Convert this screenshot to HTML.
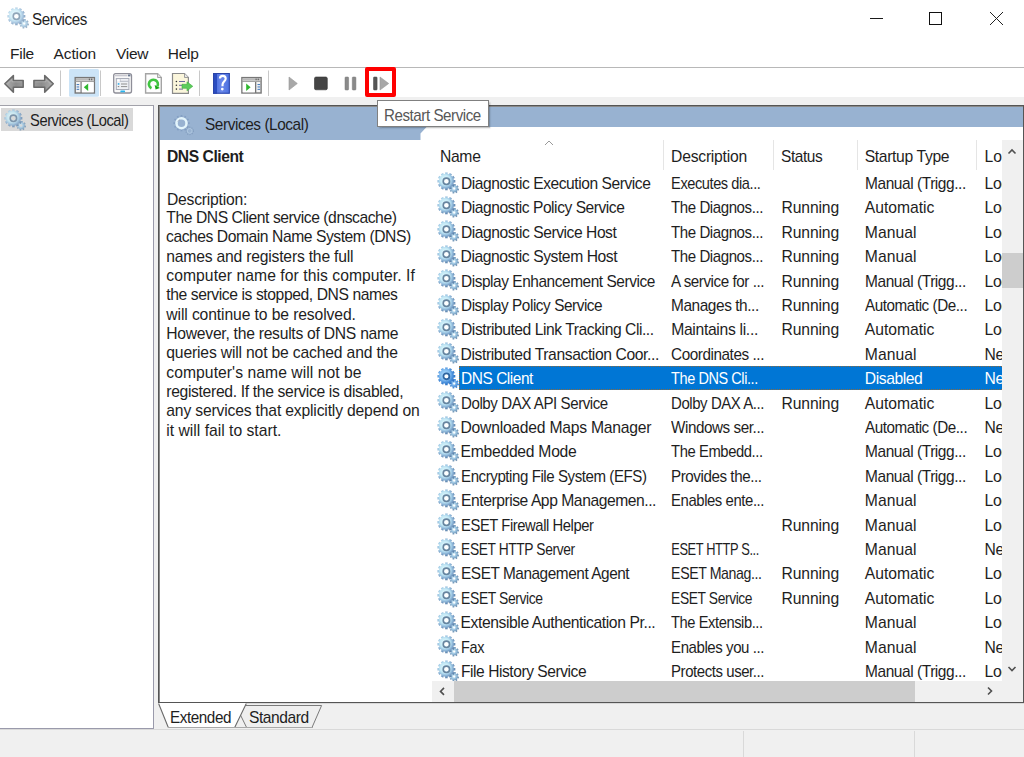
<!DOCTYPE html>
<html><head><meta charset="utf-8">
<style>
*{margin:0;padding:0;box-sizing:border-box}
html,body{width:1024px;height:757px;overflow:hidden;background:#fff;font-family:"Liberation Sans",sans-serif;color:#000}
.a{position:absolute}
.t{position:absolute;white-space:nowrap;line-height:20px;font-size:15px;color:#1e1e1e}
#toolbar-line{left:0;top:67px;width:1024px;height:1px;background:#b8b8b8}
#greyband{left:0;top:97px;width:1024px;height:660px;background:#f0f0f0}
#leftpanel{left:0;top:105px;width:154px;height:624px;background:#fff;border-top:1px solid #a2a2aa;border-right:1px solid #9a9aab;border-bottom:1px solid #9a9aab}
#lsel{left:1px;top:108px;width:132px;height:23px;background:#d9d9d9}
#rightpanel{left:158px;top:105px;width:866px;height:598px;background:#fff;border:1px solid #555;box-shadow:inset 1px 1px 0 #8a8a8a}
#hdrband{left:160px;top:107px;width:863px;height:20px;background:#98b2d1}
#selrow{left:458.7px;top:366px;width:543.3px;height:24px;background:#0076d5;border-top:1px dotted #8a6a40;border-bottom:1px dotted #8a6a40;border-left:1px dotted #8a6a40}
.sep{position:absolute;top:140px;width:1px;height:30px;background:#e5e5e5}
#vscroll{left:1002px;top:140px;width:21px;height:541px;background:#f0f0f0;z-index:5}
#vthumb{left:1002px;top:253px;width:21px;height:35px;background:#cdcdcd;z-index:5}
#hscroll{left:432px;top:681px;width:570px;height:21px;background:#f0f0f0;z-index:5}
#hthumb{left:454px;top:681px;width:461px;height:21px;background:#cdcdcd;z-index:5}
#hcorner{left:1002px;top:681px;width:21px;height:21px;background:#f0f0f0;z-index:5}
#tip{left:376.5px;top:100.3px;width:112.5px;height:27px;background:#fff;border:1px solid #808080;box-shadow:1.5px 1.5px 1.5px rgba(0,0,0,0.22);z-index:6}
#tip-t{z-index:7}
#redbox{left:365px;top:67px;width:31px;height:30px;border:4px solid #ff0000;border-radius:2px;z-index:8}
#statusline{left:0;top:729px;width:1024px;height:1px;background:#d9d9d9}
.ssep{position:absolute;top:731px;width:1px;height:26px;background:#d9d9d9}
</style></head><body>
<svg width="0" height="0" style="position:absolute"><defs><radialGradient id="gb" cx="0.42" cy="0.42" r="0.62"><stop offset="0" stop-color="#e8fbff"/><stop offset="0.45" stop-color="#c2e8f5"/><stop offset="0.62" stop-color="#9fc8e4"/><stop offset="0.8" stop-color="#789fc6"/><stop offset="1" stop-color="#52779e"/></radialGradient>
<radialGradient id="gs" cx="0.45" cy="0.45" r="0.6"><stop offset="0" stop-color="#d4eef8"/><stop offset="0.45" stop-color="#9cc4e0"/><stop offset="1" stop-color="#52779e"/></radialGradient>
<symbol id="gear" viewBox="0 0 22 22">
<path d="M20.80,16.57L22.00,16.72L21.63,18.55L20.46,18.22L19.83,19.15L20.58,20.11L19.02,21.14L18.43,20.08L17.33,20.30L17.18,21.50L15.35,21.13L15.68,19.96L14.75,19.33L13.79,20.08L12.76,18.52L13.82,17.93L13.60,16.83L12.40,16.68L12.77,14.85L13.94,15.18L14.57,14.25L13.82,13.29L15.38,12.26L15.97,13.32L17.07,13.10L17.22,11.90L19.05,12.27L18.72,13.44L19.65,14.07L20.61,13.32L21.64,14.88L20.58,15.47ZM18.30,16.60A1.1,1.1 0 1 0 16.10,16.60A1.1,1.1 0 1 0 18.30,16.60Z" fill="url(#gs)" fill-rule="evenodd"/>
<path d="M16.79,8.05L18.30,7.99L18.30,10.61L16.79,10.55L16.43,11.91L17.77,12.61L16.45,14.89L15.18,14.08L14.18,15.08L14.99,16.35L12.71,17.67L12.01,16.33L10.65,16.69L10.71,18.20L8.09,18.20L8.15,16.69L6.79,16.33L6.09,17.67L3.81,16.35L4.62,15.08L3.62,14.08L2.35,14.89L1.03,12.61L2.37,11.91L2.01,10.55L0.50,10.61L0.50,7.99L2.01,8.05L2.37,6.69L1.03,5.99L2.35,3.71L3.62,4.52L4.62,3.52L3.81,2.25L6.09,0.93L6.79,2.27L8.15,1.91L8.09,0.40L10.71,0.40L10.65,1.91L12.01,2.27L12.71,0.93L14.99,2.25L14.18,3.52L15.18,4.52L16.45,3.71L17.77,5.99L16.43,6.69ZM11.70,9.30A2.3,2.3 0 1 0 7.10,9.30A2.3,2.3 0 1 0 11.70,9.30Z" fill="url(#gb)" fill-rule="evenodd"/>
<circle cx="9.4" cy="9.3" r="3.2" fill="none" stroke="#67849f" stroke-width="1.6"/>
</symbol>
<radialGradient id="gbs" cx="0.42" cy="0.42" r="0.6"><stop offset="0" stop-color="#b8e0fa"/><stop offset="0.5" stop-color="#7fbaf0"/><stop offset="0.72" stop-color="#4a90dc"/><stop offset="1" stop-color="#2a6fc0"/></radialGradient>
<radialGradient id="gss" cx="0.45" cy="0.45" r="0.6"><stop offset="0" stop-color="#a8d4f6"/><stop offset="0.45" stop-color="#6aa8e8"/><stop offset="1" stop-color="#2a6fc0"/></radialGradient>
<symbol id="gearsel" viewBox="0 0 22 22">
<path d="M20.80,16.57L22.00,16.72L21.63,18.55L20.46,18.22L19.83,19.15L20.58,20.11L19.02,21.14L18.43,20.08L17.33,20.30L17.18,21.50L15.35,21.13L15.68,19.96L14.75,19.33L13.79,20.08L12.76,18.52L13.82,17.93L13.60,16.83L12.40,16.68L12.77,14.85L13.94,15.18L14.57,14.25L13.82,13.29L15.38,12.26L15.97,13.32L17.07,13.10L17.22,11.90L19.05,12.27L18.72,13.44L19.65,14.07L20.61,13.32L21.64,14.88L20.58,15.47ZM18.30,16.60A1.1,1.1 0 1 0 16.10,16.60A1.1,1.1 0 1 0 18.30,16.60Z" fill="url(#gss)" fill-rule="evenodd"/>
<path d="M16.79,8.05L18.30,7.99L18.30,10.61L16.79,10.55L16.43,11.91L17.77,12.61L16.45,14.89L15.18,14.08L14.18,15.08L14.99,16.35L12.71,17.67L12.01,16.33L10.65,16.69L10.71,18.20L8.09,18.20L8.15,16.69L6.79,16.33L6.09,17.67L3.81,16.35L4.62,15.08L3.62,14.08L2.35,14.89L1.03,12.61L2.37,11.91L2.01,10.55L0.50,10.61L0.50,7.99L2.01,8.05L2.37,6.69L1.03,5.99L2.35,3.71L3.62,4.52L4.62,3.52L3.81,2.25L6.09,0.93L6.79,2.27L8.15,1.91L8.09,0.40L10.71,0.40L10.65,1.91L12.01,2.27L12.71,0.93L14.99,2.25L14.18,3.52L15.18,4.52L16.45,3.71L17.77,5.99L16.43,6.69ZM11.70,9.30A2.3,2.3 0 1 0 7.10,9.30A2.3,2.3 0 1 0 11.70,9.30Z" fill="url(#gbs)" fill-rule="evenodd"/>
<circle cx="9.4" cy="9.3" r="3.0" fill="none" stroke="#2f64a0" stroke-width="1.7"/>
</symbol>
<symbol id="gearf" viewBox="0 0 22 22">
<path d="M15.85,8.36L17.66,8.34L17.66,10.06L15.85,10.04L15.41,11.65L16.99,12.54L16.13,14.02L14.58,13.10L13.40,14.28L14.32,15.83L12.84,16.69L11.95,15.11L10.34,15.55L10.36,17.36L8.64,17.36L8.66,15.55L7.05,15.11L6.16,16.69L4.68,15.83L5.60,14.28L4.42,13.10L2.87,14.02L2.01,12.54L3.59,11.65L3.15,10.04L1.34,10.06L1.34,8.34L3.15,8.36L3.59,6.75L2.01,5.86L2.87,4.38L4.42,5.30L5.60,4.12L4.68,2.57L6.16,1.71L7.05,3.29L8.66,2.85L8.64,1.04L10.36,1.04L10.34,2.85L11.95,3.29L12.84,1.71L14.32,2.57L13.40,4.12L14.58,5.30L16.13,4.38L16.99,5.86L15.41,6.75Z" fill="#7290b8" opacity="0.55"/>
<circle cx="9.5" cy="9.2" r="6.4" fill="#98b2d1"/>
<circle cx="9.5" cy="9.2" r="5.0" fill="none" stroke="#e4f5fc" stroke-width="2.5"/>
<path d="M5.8,7.5 A4,4 0 0 1 8.2,5.6" fill="none" stroke="#8a8aa0" stroke-width="0.9" opacity="0.7"/>
<circle cx="17.7" cy="16.9" r="3.6" fill="none" stroke="#7a96b8" stroke-width="1.4" stroke-dasharray="1.1 1.2" opacity="0.7"/>
<circle cx="17.7" cy="16.9" r="2.4" fill="none" stroke="#b4cce2" stroke-width="1" opacity="0.8"/>
</symbol></defs></svg>

<!-- title bar -->
<svg class="a" style="left:7px;top:7px" width="22" height="22" opacity="0.72"><use href="#gear"/></svg>
<div class="a" style="left:870px;top:18px;width:13px;height:1px;background:#1a1a1a"></div>
<div class="a" style="left:929px;top:12px;width:13px;height:13px;border:1px solid #111"></div>
<svg class="a" style="left:989px;top:11px" width="15" height="15"><path d="M1,1L14,14M14,1L1,14" stroke="#222" stroke-width="1"/></svg>
<div class="a" id="toolbar-line"></div>

<svg class="a" style="left:0;top:0" width="400" height="100" viewBox="0 0 400 100">
<defs>
<linearGradient id="ag" x1="0" y1="0" x2="1" y2="0"><stop offset="0" stop-color="#b0b0b0"/><stop offset="0.6" stop-color="#8c8c8c"/><stop offset="1" stop-color="#9a9a9a"/></linearGradient><linearGradient id="ag2" x1="1" y1="0" x2="0" y2="0"><stop offset="0" stop-color="#b0b0b0"/><stop offset="0.6" stop-color="#8c8c8c"/><stop offset="1" stop-color="#9a9a9a"/></linearGradient>
<linearGradient id="hb" x1="0" y1="0" x2="1" y2="0"><stop offset="0" stop-color="#3d62d8"/><stop offset="0.5" stop-color="#6a88ea"/><stop offset="1" stop-color="#4a70e0"/></linearGradient>
</defs>
<!-- back arrow -->
<path d="M4.8,83.8 L13.4,75.6 L13.4,80.4 L23.2,80.4 L23.2,87.3 L13.4,87.3 L13.4,92.3 Z" fill="url(#ag)" stroke="#6a6a6a" stroke-width="1.5" stroke-linejoin="round"/><path d="M7.5,83.8 L12,79.5 L12,81.8 L21.8,81.8" fill="none" stroke="#c4c4c4" stroke-width="0.7" opacity="0.7"/>
<!-- forward arrow -->
<path d="M53.3,83.8 L44.7,75.6 L44.7,80.4 L33.9,80.4 L33.9,87.3 L44.7,87.3 L44.7,92.3 Z" fill="url(#ag2)" stroke="#6a6a6a" stroke-width="1.5" stroke-linejoin="round"/><path d="M35.3,81.8 L46,81.8 L46,79.5 L50.5,83.8" fill="none" stroke="#c4c4c4" stroke-width="0.7" opacity="0.7"/>
<!-- separators -->
<rect x="60" y="70.5" width="1" height="25.5" fill="#c8c8c8"/>
<rect x="100" y="70.5" width="1" height="25.5" fill="#c8c8c8"/>
<rect x="199" y="70.5" width="1" height="25.5" fill="#c8c8c8"/>
<rect x="268" y="70.5" width="1" height="25.5" fill="#c8c8c8"/>
<!-- selected button -->
<rect x="69" y="69" width="30" height="27.8" rx="1.5" fill="#cce4f7"/>
<!-- console tree icon -->
<rect x="75.2" y="77.6" width="19.2" height="15.4" fill="#f4f4f4" stroke="#777" stroke-width="1.4"/>
<rect x="75.9" y="78.3" width="17.8" height="2.4" fill="#b8b8b8"/><rect x="91" y="78.6" width="1.2" height="1.6" fill="#666"/><rect x="88.8" y="78.6" width="1.2" height="1.6" fill="#666"/>
<rect x="75.2" y="81" width="19.2" height="0.9" fill="#9a9a9a"/>
<rect x="80.5" y="82" width="1.3" height="11" fill="#777"/>
<rect x="81.8" y="82.2" width="11.9" height="10.1" fill="#fff"/>
<rect x="76.6" y="84" width="2.6" height="1.1" fill="#4a7fc0"/>
<rect x="76.6" y="86.4" width="2.6" height="1.1" fill="#4a7fc0"/>
<rect x="76.6" y="88.8" width="2.6" height="1.1" fill="#4a7fc0"/>
<path d="M83.8,87.3 L88.2,83.6 L88.2,91 Z" fill="#30b830"/>
<!-- properties icon -->
<rect x="113.7" y="73.6" width="17.8" height="19.4" rx="2" fill="#f8f8f8" stroke="#8e8e98" stroke-width="1.3"/>
<rect x="115" y="75" width="12.5" height="1.3" fill="#c8c8d0"/>
<rect x="128" y="74.5" width="2.4" height="1.9" fill="#6a7890"/>
<rect x="116.3" y="78.5" width="12.6" height="11" fill="#eef0f4" stroke="#a8acb8" stroke-width="1"/>
<path d="M117,79 L120,79 L120,81.3 L128.4,81.3" fill="none" stroke="#b0b4c0" stroke-width="0.9"/>
<rect x="117.2" y="79.2" width="2.6" height="2" fill="#fff"/>
<rect x="117.8" y="83.2" width="1.6" height="1.5" fill="#29a8e8"/>
<rect x="121" y="83.4" width="6.2" height="1.2" fill="#a0a0a0"/>
<rect x="117.8" y="86" width="1.4" height="1.1" fill="#888"/>
<rect x="121" y="86" width="6.2" height="1.1" fill="#999"/>
<rect x="120.4" y="90.6" width="4.6" height="1.7" rx="0.5" fill="#29b4ee"/>
<!-- refresh doc -->
<path d="M145.6,73.7 L157.6,73.7 L161.3,77.5 L161.3,93 L145.6,93 Z" fill="#fdfdfd" stroke="#a4a4a4" stroke-width="1.4"/>
<path d="M157.6,73.7 L157.6,77.5 L161.3,77.5" fill="#e6e6e6" stroke="#9a9a9a" stroke-width="0.9"/>
<path d="M151.50,88.28 A4.5,4.5 0 1 1 157.30,86.45" fill="none" stroke="#40c440" stroke-width="2.6"/>
<path d="M159.90,87.95 L154.70,84.95 L155.60,89.39 Z" fill="#12a812"/>
<!-- export list doc -->
<path d="M172.5,73.5 L184.5,73.5 L188.4,77.5 L188.4,93.3 L172.5,93.3 Z" fill="#fbf6dc" stroke="#8a8a8a" stroke-width="1.2"/>
<path d="M184.5,73.5 L184.5,77.5 L188.4,77.5" fill="#e8e8e8" stroke="#8a8a8a" stroke-width="0.8"/>
<circle cx="176.4" cy="81.5" r="0.8" fill="#333"/><rect x="179" y="81" width="6" height="1" fill="#6a6aa0"/>
<circle cx="176.4" cy="85.3" r="0.8" fill="#333"/><rect x="179" y="84.8" width="4" height="1" fill="#6a6aa0"/>
<circle cx="176.4" cy="89.1" r="0.8" fill="#333"/><rect x="179" y="88.6" width="4" height="1" fill="#6a6aa0"/>
<path d="M182,84.3 L187,84.3 L187,81.8 L192.8,86.3 L187,90.8 L187,88.3 L182,88.3 Z" fill="#5ccc5c" stroke="#3fae3f" stroke-width="0.6"/>
<!-- help -->
<rect x="213" y="73" width="16.8" height="20.7" fill="url(#hb)"/>
<rect x="213" y="73" width="4" height="20.7" fill="#2b4cc0"/>
<rect x="213.5" y="73.5" width="15.8" height="19.7" fill="none" stroke="#2a44a8" stroke-width="1"/>
<path d="M219.9,78.6 C219.9,76.6 221.2,75.9 222.8,75.9 C224.7,75.9 225.7,77.1 225.7,78.7 C225.7,80.9 223.0,81.6 222.6,84.2 L222.5,86.3" fill="none" stroke="#ffffff" stroke-width="2.1"/>
<circle cx="222.3" cy="89.1" r="1.35" fill="#fff"/>
<!-- action pane icon -->
<rect x="241.9" y="77.6" width="19.2" height="15.4" fill="#f4f4f4" stroke="#777" stroke-width="1.4"/>
<rect x="242.6" y="78.3" width="17.8" height="2.4" fill="#b8b8b8"/><rect x="257.7" y="78.6" width="1.2" height="1.6" fill="#666"/><rect x="255.5" y="78.6" width="1.2" height="1.6" fill="#666"/>
<rect x="241.9" y="81" width="19.2" height="0.9" fill="#9a9a9a"/>
<rect x="255" y="82" width="1.3" height="11" fill="#777"/>
<rect x="242.8" y="82.2" width="12" height="10.1" fill="#fff"/>
<rect x="257.5" y="84" width="2.6" height="1.1" fill="#4a7fc0"/>
<rect x="257.5" y="86.4" width="2.6" height="1.1" fill="#4a7fc0"/>
<rect x="257.5" y="88.8" width="2.6" height="1.1" fill="#4a7fc0"/>
<path d="M246.2,83.6 L250.6,87.3 L246.2,91 Z" fill="#30b830"/>
<!-- play -->
<path d="M289,77 L297.3,83.5 L289,90 Z" fill="#a8a8a8" stroke="#999" stroke-width="0.6" stroke-linejoin="round"/>
<!-- stop -->
<rect x="314.5" y="77" width="12.8" height="12.8" rx="1.5" fill="#454545" stroke="#333" stroke-width="0.6"/>
<!-- pause -->
<rect x="345" y="77" width="3.6" height="13" rx="0.8" fill="#8a8a8a" stroke="#777" stroke-width="0.5"/>
<rect x="352.3" y="77" width="3.6" height="13" rx="0.8" fill="#8a8a8a" stroke="#777" stroke-width="0.5"/>
<!-- restart -->
<rect x="373.5" y="77" width="3.6" height="13" rx="0.8" fill="#555" stroke="#444" stroke-width="0.5"/>
<path d="M380,77 L388.7,83.5 L380,90 Z" fill="#a8a8a8" stroke="#999" stroke-width="0.6" stroke-linejoin="round"/>
</svg>


<div class="a" id="greyband"></div>
<div class="a" id="leftpanel"></div>
<div class="a" id="lsel"></div>
<svg class="a" style="left:3.5px;top:108.8px" width="22" height="22" opacity="0.8"><use href="#gear"/></svg>

<div class="a" id="rightpanel"></div>
<div class="a" id="hdrband"></div>
<svg class="a" style="left:0;top:0" width="440" height="145"><path d="M160,126.5 L427,126.5 L420.5,133.5 L420.5,140 L160,140 Z" fill="#98b2d1"/></svg>
<svg class="a" style="left:172px;top:113.5px" width="22" height="22"><use href="#gearf"/></svg>

<!-- list header -->
<svg class="a" style="left:543.5px;top:140px" width="10" height="6"><path d="M1,5L5,1L9,5" fill="none" stroke="#999" stroke-width="1"/></svg>
<div class="sep" style="left:663px"></div>
<div class="sep" style="left:773px"></div>
<div class="sep" style="left:857px"></div>
<div class="sep" style="left:976px"></div>

<div class="a" style="left:160px;top:703px;width:864px;height:1px;background:#d8d8d8"></div>
<!-- bottom tabs -->
<svg class="a" style="left:150px;top:700px" width="200" height="32" viewBox="150 700 200 32">

<path d="M235.8,705.5 L321.6,705.5 L312,727.5 L246.6,727.5 Z" fill="#efefef"/>
<path d="M235.8,705.5 L321.6,705.5 L312,727.5 M246.6,727.5 L235.8,705.5" fill="none" stroke="#7a7a7a" stroke-width="1"/>
<path d="M158.3,703 L246.6,703 L234.8,727.5 L168,727.5 Z" fill="#fff"/>
<path d="M158.6,703.5 L168.2,727.3 M234.8,727.3 L246.3,703.5" fill="none" stroke="#6a6a6a" stroke-width="1.1"/>
<rect x="168" y="727" width="145" height="1" fill="#a8a8a8"/>
</svg>
<div class="a" id="selrow"></div>
<svg class="a gi" style="left:437px;top:171.6px" width="22" height="22"><use href="#gear"/></svg>
<svg class="a gi" style="left:437px;top:196.0px" width="22" height="22"><use href="#gear"/></svg>
<svg class="a gi" style="left:437px;top:220.4px" width="22" height="22"><use href="#gear"/></svg>
<svg class="a gi" style="left:437px;top:244.8px" width="22" height="22"><use href="#gear"/></svg>
<svg class="a gi" style="left:437px;top:269.2px" width="22" height="22"><use href="#gear"/></svg>
<svg class="a gi" style="left:437px;top:293.6px" width="22" height="22"><use href="#gear"/></svg>
<svg class="a gi" style="left:437px;top:318.0px" width="22" height="22"><use href="#gear"/></svg>
<svg class="a gi" style="left:437px;top:342.4px" width="22" height="22"><use href="#gear"/></svg>
<svg class="a gi" style="left:437px;top:366.8px" width="22" height="22"><use href="#gearsel"/></svg>
<svg class="a gi" style="left:437px;top:391.2px" width="22" height="22"><use href="#gear"/></svg>
<svg class="a gi" style="left:437px;top:415.6px" width="22" height="22"><use href="#gear"/></svg>
<svg class="a gi" style="left:437px;top:440.0px" width="22" height="22"><use href="#gear"/></svg>
<svg class="a gi" style="left:437px;top:464.4px" width="22" height="22"><use href="#gear"/></svg>
<svg class="a gi" style="left:437px;top:488.8px" width="22" height="22"><use href="#gear"/></svg>
<svg class="a gi" style="left:437px;top:513.2px" width="22" height="22"><use href="#gear"/></svg>
<svg class="a gi" style="left:437px;top:537.6px" width="22" height="22"><use href="#gear"/></svg>
<svg class="a gi" style="left:437px;top:562.0px" width="22" height="22"><use href="#gear"/></svg>
<svg class="a gi" style="left:437px;top:586.4px" width="22" height="22"><use href="#gear"/></svg>
<svg class="a gi" style="left:437px;top:610.8px" width="22" height="22"><use href="#gear"/></svg>
<svg class="a gi" style="left:437px;top:635.2px" width="22" height="22"><use href="#gear"/></svg>
<svg class="a gi" style="left:437px;top:659.6px" width="22" height="22"><use href="#gear"/></svg>


<div id="title" class="t" style="left:31.6px;top:9.05px;font-size:16.3px;letter-spacing:-0.450px;transform:scaleX(0.9311);transform-origin:1.0px 0;">Services</div>
<div id="m1" class="t" style="left:10.0px;top:44.03px;font-size:15.5px;letter-spacing:-0.261px;">File</div>
<div id="m2" class="t" style="left:53.5px;top:44.03px;font-size:15.5px;letter-spacing:-0.099px;">Action</div>
<div id="m3" class="t" style="left:116.0px;top:44.03px;font-size:15.5px;letter-spacing:-0.309px;">View</div>
<div id="m4" class="t" style="left:167.7px;top:44.03px;font-size:15.5px;letter-spacing:-0.230px;">Help</div>
<div id="tree" class="t" style="left:30.2px;top:111.26px;font-size:15.7px;letter-spacing:-0.450px;transform:scaleX(0.9341);transform-origin:1.0px 0;">Services (Local)</div>
<div id="phdr" class="t" style="left:204.8px;top:114.96px;font-size:15.7px;letter-spacing:-0.450px;transform:scaleX(0.9819);transform-origin:1.0px 0;">Services (Local)</div>
<div id="dnsb" class="t" style="left:166.9px;top:146.76px;font-size:15.7px;letter-spacing:-0.450px;transform:scaleX(0.9972);transform-origin:1.0px 0;font-weight:bold">DNS Client</div>
<div id="desc0" class="t" style="left:166.9px;top:189.86px;font-size:15.7px;letter-spacing:-0.212px;">Description:</div>
<div id="d0" class="t" style="left:166.3px;top:207.86px;font-size:15.7px;letter-spacing:-0.450px;">The DNS Client service (dnscache)</div>
<div id="d1" class="t" style="left:166.3px;top:227.21px;font-size:15.7px;letter-spacing:-0.450px;transform:scaleX(0.9987);transform-origin:1.0px 0;">caches Domain Name System (DNS)</div>
<div id="d2" class="t" style="left:166.3px;top:246.56px;font-size:15.7px;letter-spacing:-0.204px;">names and registers the full</div>
<div id="d3" class="t" style="left:166.3px;top:265.91px;font-size:15.7px;letter-spacing:0.051px;">computer name for this computer. If</div>
<div id="d4" class="t" style="left:166.3px;top:285.26px;font-size:15.7px;letter-spacing:-0.419px;">the service is stopped, DNS names</div>
<div id="d5" class="t" style="left:166.3px;top:304.61px;font-size:15.7px;letter-spacing:-0.111px;">will continue to be resolved.</div>
<div id="d6" class="t" style="left:166.3px;top:323.96px;font-size:15.7px;letter-spacing:-0.270px;">However, the results of DNS name</div>
<div id="d7" class="t" style="left:166.3px;top:343.31px;font-size:15.7px;letter-spacing:-0.170px;">queries will not be cached and the</div>
<div id="d8" class="t" style="left:166.3px;top:362.66px;font-size:15.7px;letter-spacing:0.052px;">computer's name will not be</div>
<div id="d9" class="t" style="left:166.3px;top:382.01px;font-size:15.7px;letter-spacing:-0.341px;">registered. If the service is disabled,</div>
<div id="d10" class="t" style="left:166.3px;top:401.36px;font-size:15.7px;letter-spacing:-0.172px;">any services that explicitly depend on</div>
<div id="d11" class="t" style="left:166.3px;top:420.71px;font-size:15.7px;letter-spacing:0.000px;">it will fail to start.</div>
<div id="h0" class="t" style="left:439.9px;top:146.66px;font-size:15.7px;letter-spacing:-0.286px;">Name</div>
<div id="h1" class="t" style="left:671.1px;top:146.66px;font-size:15.7px;letter-spacing:-0.237px;">Description</div>
<div id="h2" class="t" style="left:781.3px;top:146.66px;font-size:15.7px;letter-spacing:-0.450px;transform:scaleX(0.9850);transform-origin:1.0px 0;">Status</div>
<div id="h3" class="t" style="left:864.7px;top:146.66px;font-size:15.7px;letter-spacing:-0.352px;">Startup Type</div>
<div id="h4" class="t" style="left:984.5px;top:146.66px;font-size:15.7px;letter-spacing:0.000px;">Log On As</div>
<div id="tip-t" class="t" style="left:383.8px;top:105.56px;font-size:15.7px;letter-spacing:-0.450px;transform:scaleX(0.9630);transform-origin:1.0px 0;color:#575757">Restart Service</div>
<div id="tab1" class="t" style="left:170.4px;top:708.26px;font-size:15.7px;letter-spacing:-0.450px;transform:scaleX(0.9723);transform-origin:1.0px 0;">Extended</div>
<div id="tab2" class="t" style="left:248.7px;top:708.26px;font-size:15.7px;letter-spacing:-0.450px;transform:scaleX(0.9930);transform-origin:1.0px 0;">Standard</div>
<div id="r0c0" class="t rt" style="left:460.5px;top:174.06px;font-size:15.7px;letter-spacing:-0.450px;transform:scaleX(0.9936);transform-origin:1.0px 0;">Diagnostic Execution Service</div>
<div id="r0c1" class="t rt" style="left:671.2px;top:174.06px;font-size:15.7px;letter-spacing:-0.450px;transform:scaleX(0.9295);transform-origin:1.0px 0;">Executes dia...</div>
<div id="r0c3" class="t rt" style="left:864.8px;top:174.06px;font-size:15.7px;letter-spacing:-0.450px;transform:scaleX(0.9870);transform-origin:1.0px 0;">Manual (Trigg...</div>
<div id="r0c4" class="t rt" style="left:984.5px;top:174.06px;font-size:15.7px;letter-spacing:0.000px;;letter-spacing:-0.3px">Local System</div>
<div id="r1c0" class="t rt" style="left:460.5px;top:198.46px;font-size:15.7px;letter-spacing:-0.450px;transform:scaleX(0.9908);transform-origin:1.0px 0;">Diagnostic Policy Service</div>
<div id="r1c1" class="t rt" style="left:671.2px;top:198.46px;font-size:15.7px;letter-spacing:-0.450px;transform:scaleX(0.9596);transform-origin:1.0px 0;">The Diagnos...</div>
<div id="r1c2" class="t rt" style="left:781.5px;top:198.46px;font-size:15.7px;letter-spacing:-0.123px;">Running</div>
<div id="r1c3" class="t rt" style="left:864.8px;top:198.46px;font-size:15.7px;letter-spacing:-0.021px;">Automatic</div>
<div id="r1c4" class="t rt" style="left:984.5px;top:198.46px;font-size:15.7px;letter-spacing:0.000px;;letter-spacing:-0.3px">Local System</div>
<div id="r2c0" class="t rt" style="left:460.5px;top:222.86px;font-size:15.7px;letter-spacing:-0.450px;transform:scaleX(0.9947);transform-origin:1.0px 0;">Diagnostic Service Host</div>
<div id="r2c1" class="t rt" style="left:671.2px;top:222.86px;font-size:15.7px;letter-spacing:-0.450px;transform:scaleX(0.9596);transform-origin:1.0px 0;">The Diagnos...</div>
<div id="r2c2" class="t rt" style="left:781.5px;top:222.86px;font-size:15.7px;letter-spacing:-0.123px;">Running</div>
<div id="r2c3" class="t rt" style="left:864.8px;top:222.86px;font-size:15.7px;letter-spacing:0.029px;">Manual</div>
<div id="r2c4" class="t rt" style="left:984.5px;top:222.86px;font-size:15.7px;letter-spacing:0.000px;;letter-spacing:-0.3px">Local System</div>
<div id="r3c0" class="t rt" style="left:460.5px;top:247.26px;font-size:15.7px;letter-spacing:-0.450px;">Diagnostic System Host</div>
<div id="r3c1" class="t rt" style="left:671.2px;top:247.26px;font-size:15.7px;letter-spacing:-0.450px;transform:scaleX(0.9596);transform-origin:1.0px 0;">The Diagnos...</div>
<div id="r3c2" class="t rt" style="left:781.5px;top:247.26px;font-size:15.7px;letter-spacing:-0.123px;">Running</div>
<div id="r3c3" class="t rt" style="left:864.8px;top:247.26px;font-size:15.7px;letter-spacing:0.029px;">Manual</div>
<div id="r3c4" class="t rt" style="left:984.5px;top:247.26px;font-size:15.7px;letter-spacing:0.000px;;letter-spacing:-0.3px">Local System</div>
<div id="r4c0" class="t rt" style="left:460.5px;top:271.66px;font-size:15.7px;letter-spacing:-0.450px;transform:scaleX(0.9834);transform-origin:1.0px 0;">Display Enhancement Service</div>
<div id="r4c1" class="t rt" style="left:671.2px;top:271.66px;font-size:15.7px;letter-spacing:-0.450px;transform:scaleX(0.9674);transform-origin:1.0px 0;">A service for ...</div>
<div id="r4c2" class="t rt" style="left:781.5px;top:271.66px;font-size:15.7px;letter-spacing:-0.123px;">Running</div>
<div id="r4c3" class="t rt" style="left:864.8px;top:271.66px;font-size:15.7px;letter-spacing:-0.450px;transform:scaleX(0.9870);transform-origin:1.0px 0;">Manual (Trigg...</div>
<div id="r4c4" class="t rt" style="left:984.5px;top:271.66px;font-size:15.7px;letter-spacing:0.000px;;letter-spacing:-0.3px">Local System</div>
<div id="r5c0" class="t rt" style="left:460.5px;top:296.06px;font-size:15.7px;letter-spacing:-0.450px;transform:scaleX(0.9775);transform-origin:1.0px 0;">Display Policy Service</div>
<div id="r5c1" class="t rt" style="left:671.2px;top:296.06px;font-size:15.7px;letter-spacing:-0.450px;transform:scaleX(0.9837);transform-origin:1.0px 0;">Manages th...</div>
<div id="r5c2" class="t rt" style="left:781.5px;top:296.06px;font-size:15.7px;letter-spacing:-0.123px;">Running</div>
<div id="r5c3" class="t rt" style="left:864.8px;top:296.06px;font-size:15.7px;letter-spacing:-0.450px;transform:scaleX(0.9705);transform-origin:1.0px 0;">Automatic (De...</div>
<div id="r5c4" class="t rt" style="left:984.5px;top:296.06px;font-size:15.7px;letter-spacing:0.000px;;letter-spacing:-0.3px">Local System</div>
<div id="r6c0" class="t rt" style="left:460.5px;top:320.46px;font-size:15.7px;letter-spacing:-0.450px;transform:scaleX(0.9977);transform-origin:1.0px 0;">Distributed Link Tracking Cli...</div>
<div id="r6c1" class="t rt" style="left:671.2px;top:320.46px;font-size:15.7px;letter-spacing:-0.318px;">Maintains li...</div>
<div id="r6c2" class="t rt" style="left:781.5px;top:320.46px;font-size:15.7px;letter-spacing:-0.123px;">Running</div>
<div id="r6c3" class="t rt" style="left:864.8px;top:320.46px;font-size:15.7px;letter-spacing:-0.021px;">Automatic</div>
<div id="r6c4" class="t rt" style="left:984.5px;top:320.46px;font-size:15.7px;letter-spacing:0.000px;;letter-spacing:-0.3px">Local System</div>
<div id="r7c0" class="t rt" style="left:460.5px;top:344.86px;font-size:15.7px;letter-spacing:-0.407px;">Distributed Transaction Coor...</div>
<div id="r7c1" class="t rt" style="left:671.2px;top:344.86px;font-size:15.7px;letter-spacing:-0.450px;transform:scaleX(0.9756);transform-origin:1.0px 0;">Coordinates ...</div>
<div id="r7c3" class="t rt" style="left:864.8px;top:344.86px;font-size:15.7px;letter-spacing:0.029px;">Manual</div>
<div id="r7c4" class="t rt" style="left:984.5px;top:344.86px;font-size:15.7px;letter-spacing:0.000px;;letter-spacing:-0.3px">Network Service</div>
<div id="r8c0" class="t rt" style="left:460.5px;top:369.26px;font-size:15.7px;letter-spacing:-0.450px;transform:scaleX(0.9844);transform-origin:1.0px 0;color:#fff">DNS Client</div>
<div id="r8c1" class="t rt" style="left:671.2px;top:369.26px;font-size:15.7px;letter-spacing:-0.450px;transform:scaleX(0.9227);transform-origin:1.0px 0;color:#fff">The DNS Cli...</div>
<div id="r8c3" class="t rt" style="left:864.8px;top:369.26px;font-size:15.7px;letter-spacing:-0.435px;color:#fff">Disabled</div>
<div id="r8c4" class="t rt" style="left:984.5px;top:369.26px;font-size:15.7px;letter-spacing:0.000px;color:#fff;letter-spacing:-0.3px">Network Service</div>
<div id="r9c0" class="t rt" style="left:460.5px;top:393.66px;font-size:15.7px;letter-spacing:-0.450px;transform:scaleX(0.9610);transform-origin:1.0px 0;">Dolby DAX API Service</div>
<div id="r9c1" class="t rt" style="left:671.2px;top:393.66px;font-size:15.7px;letter-spacing:-0.450px;transform:scaleX(0.9539);transform-origin:1.0px 0;">Dolby DAX A...</div>
<div id="r9c2" class="t rt" style="left:781.5px;top:393.66px;font-size:15.7px;letter-spacing:-0.123px;">Running</div>
<div id="r9c3" class="t rt" style="left:864.8px;top:393.66px;font-size:15.7px;letter-spacing:-0.021px;">Automatic</div>
<div id="r9c4" class="t rt" style="left:984.5px;top:393.66px;font-size:15.7px;letter-spacing:0.000px;;letter-spacing:-0.3px">Local System</div>
<div id="r10c0" class="t rt" style="left:460.5px;top:418.06px;font-size:15.7px;letter-spacing:-0.242px;">Downloaded Maps Manager</div>
<div id="r10c1" class="t rt" style="left:671.2px;top:418.06px;font-size:15.7px;letter-spacing:-0.450px;transform:scaleX(0.9714);transform-origin:1.0px 0;">Windows ser...</div>
<div id="r10c3" class="t rt" style="left:864.8px;top:418.06px;font-size:15.7px;letter-spacing:-0.450px;transform:scaleX(0.9705);transform-origin:1.0px 0;">Automatic (De...</div>
<div id="r10c4" class="t rt" style="left:984.5px;top:418.06px;font-size:15.7px;letter-spacing:0.000px;;letter-spacing:-0.3px">Network Service</div>
<div id="r11c0" class="t rt" style="left:460.5px;top:442.46px;font-size:15.7px;letter-spacing:-0.265px;">Embedded Mode</div>
<div id="r11c1" class="t rt" style="left:671.2px;top:442.46px;font-size:15.7px;letter-spacing:-0.450px;transform:scaleX(0.9435);transform-origin:1.0px 0;">The Embedd...</div>
<div id="r11c3" class="t rt" style="left:864.8px;top:442.46px;font-size:15.7px;letter-spacing:-0.450px;transform:scaleX(0.9870);transform-origin:1.0px 0;">Manual (Trigg...</div>
<div id="r11c4" class="t rt" style="left:984.5px;top:442.46px;font-size:15.7px;letter-spacing:0.000px;;letter-spacing:-0.3px">Local System</div>
<div id="r12c0" class="t rt" style="left:460.5px;top:466.86px;font-size:15.7px;letter-spacing:-0.450px;transform:scaleX(0.9603);transform-origin:1.0px 0;">Encrypting File System (EFS)</div>
<div id="r12c1" class="t rt" style="left:671.2px;top:466.86px;font-size:15.7px;letter-spacing:-0.450px;transform:scaleX(0.9672);transform-origin:1.0px 0;">Provides the...</div>
<div id="r12c3" class="t rt" style="left:864.8px;top:466.86px;font-size:15.7px;letter-spacing:-0.450px;transform:scaleX(0.9870);transform-origin:1.0px 0;">Manual (Trigg...</div>
<div id="r12c4" class="t rt" style="left:984.5px;top:466.86px;font-size:15.7px;letter-spacing:0.000px;;letter-spacing:-0.3px">Local System</div>
<div id="r13c0" class="t rt" style="left:460.5px;top:491.26px;font-size:15.7px;letter-spacing:-0.450px;transform:scaleX(0.9977);transform-origin:1.0px 0;">Enterprise App Managemen...</div>
<div id="r13c1" class="t rt" style="left:671.2px;top:491.26px;font-size:15.7px;letter-spacing:-0.450px;transform:scaleX(0.9495);transform-origin:1.0px 0;">Enables ente...</div>
<div id="r13c3" class="t rt" style="left:864.8px;top:491.26px;font-size:15.7px;letter-spacing:0.029px;">Manual</div>
<div id="r13c4" class="t rt" style="left:984.5px;top:491.26px;font-size:15.7px;letter-spacing:0.000px;;letter-spacing:-0.3px">Local System</div>
<div id="r14c0" class="t rt" style="left:460.5px;top:515.66px;font-size:15.7px;letter-spacing:-0.450px;transform:scaleX(0.9417);transform-origin:1.0px 0;">ESET Firewall Helper</div>
<div id="r14c2" class="t rt" style="left:781.5px;top:515.66px;font-size:15.7px;letter-spacing:-0.123px;">Running</div>
<div id="r14c3" class="t rt" style="left:864.8px;top:515.66px;font-size:15.7px;letter-spacing:0.029px;">Manual</div>
<div id="r14c4" class="t rt" style="left:984.5px;top:515.66px;font-size:15.7px;letter-spacing:0.000px;;letter-spacing:-0.3px">Local System</div>
<div id="r15c0" class="t rt" style="left:460.5px;top:540.06px;font-size:15.7px;letter-spacing:-0.450px;transform:scaleX(0.8792);transform-origin:1.0px 0;">ESET HTTP Server</div>
<div id="r15c1" class="t rt" style="left:671.2px;top:540.06px;font-size:15.7px;letter-spacing:-0.450px;transform:scaleX(0.8184);transform-origin:1.0px 0;">ESET HTTP S...</div>
<div id="r15c3" class="t rt" style="left:864.8px;top:540.06px;font-size:15.7px;letter-spacing:0.029px;">Manual</div>
<div id="r15c4" class="t rt" style="left:984.5px;top:540.06px;font-size:15.7px;letter-spacing:0.000px;;letter-spacing:-0.3px">Network Service</div>
<div id="r16c0" class="t rt" style="left:460.5px;top:564.46px;font-size:15.7px;letter-spacing:-0.450px;transform:scaleX(0.9796);transform-origin:1.0px 0;">ESET Management Agent</div>
<div id="r16c1" class="t rt" style="left:671.2px;top:564.46px;font-size:15.7px;letter-spacing:-0.450px;transform:scaleX(0.9027);transform-origin:1.0px 0;">ESET Manag...</div>
<div id="r16c2" class="t rt" style="left:781.5px;top:564.46px;font-size:15.7px;letter-spacing:-0.123px;">Running</div>
<div id="r16c3" class="t rt" style="left:864.8px;top:564.46px;font-size:15.7px;letter-spacing:-0.021px;">Automatic</div>
<div id="r16c4" class="t rt" style="left:984.5px;top:564.46px;font-size:15.7px;letter-spacing:0.000px;;letter-spacing:-0.3px">Local System</div>
<div id="r17c0" class="t rt" style="left:460.5px;top:588.86px;font-size:15.7px;letter-spacing:-0.450px;transform:scaleX(0.8874);transform-origin:1.0px 0;">ESET Service</div>
<div id="r17c1" class="t rt" style="left:671.2px;top:588.86px;font-size:15.7px;letter-spacing:-0.450px;transform:scaleX(0.8809);transform-origin:1.0px 0;">ESET Service</div>
<div id="r17c2" class="t rt" style="left:781.5px;top:588.86px;font-size:15.7px;letter-spacing:-0.123px;">Running</div>
<div id="r17c3" class="t rt" style="left:864.8px;top:588.86px;font-size:15.7px;letter-spacing:-0.021px;">Automatic</div>
<div id="r17c4" class="t rt" style="left:984.5px;top:588.86px;font-size:15.7px;letter-spacing:0.000px;;letter-spacing:-0.3px">Local System</div>
<div id="r18c0" class="t rt" style="left:460.5px;top:613.26px;font-size:15.7px;letter-spacing:-0.412px;">Extensible Authentication Pr...</div>
<div id="r18c1" class="t rt" style="left:671.2px;top:613.26px;font-size:15.7px;letter-spacing:-0.450px;transform:scaleX(0.9355);transform-origin:1.0px 0;">The Extensib...</div>
<div id="r18c3" class="t rt" style="left:864.8px;top:613.26px;font-size:15.7px;letter-spacing:0.029px;">Manual</div>
<div id="r18c4" class="t rt" style="left:984.5px;top:613.26px;font-size:15.7px;letter-spacing:0.000px;;letter-spacing:-0.3px">Local System</div>
<div id="r19c0" class="t rt" style="left:460.5px;top:637.66px;font-size:15.7px;letter-spacing:-0.450px;transform:scaleX(0.9225);transform-origin:1.0px 0;">Fax</div>
<div id="r19c1" class="t rt" style="left:671.2px;top:637.66px;font-size:15.7px;letter-spacing:-0.450px;transform:scaleX(0.9581);transform-origin:1.0px 0;">Enables you ...</div>
<div id="r19c3" class="t rt" style="left:864.8px;top:637.66px;font-size:15.7px;letter-spacing:0.029px;">Manual</div>
<div id="r19c4" class="t rt" style="left:984.5px;top:637.66px;font-size:15.7px;letter-spacing:0.000px;;letter-spacing:-0.3px">Network Service</div>
<div id="r20c0" class="t rt" style="left:460.5px;top:662.06px;font-size:15.7px;letter-spacing:-0.450px;transform:scaleX(0.9923);transform-origin:1.0px 0;">File History Service</div>
<div id="r20c1" class="t rt" style="left:671.2px;top:662.06px;font-size:15.7px;letter-spacing:-0.450px;transform:scaleX(0.9541);transform-origin:1.0px 0;">Protects user...</div>
<div id="r20c3" class="t rt" style="left:864.8px;top:662.06px;font-size:15.7px;letter-spacing:-0.450px;transform:scaleX(0.9870);transform-origin:1.0px 0;">Manual (Trigg...</div>
<div id="r20c4" class="t rt" style="left:984.5px;top:662.06px;font-size:15.7px;letter-spacing:0.000px;;letter-spacing:-0.3px">Local System</div>

<div class="a" id="vscroll"></div>
<div class="a" id="vthumb"></div>
<div class="a" id="hscroll"></div>
<div class="a" id="hthumb"></div>
<div class="a" id="hcorner"></div>
<div class="a" style="left:1023px;top:105px;width:1px;height:598px;background:#555;z-index:6"></div>
<svg class="a" style="left:1002px;top:140px;z-index:6" width="20" height="562">
<path d="M6.5,13.5 L10,10 L13.5,13.5" fill="none" stroke="#505050" stroke-width="1.6"/>
<path d="M6.5,527 L10,530.5 L13.5,527" fill="none" stroke="#505050" stroke-width="1.6"/>
</svg>
<svg class="a" style="left:980px;top:681px;z-index:6" width="20" height="20"><path d="M8,6.5 L11.5,10 L8,13.5" fill="none" stroke="#505050" stroke-width="1.6"/></svg>
<svg class="a" style="left:432px;top:681px;z-index:6" width="22" height="20">
<path d="M12,6.9 L8.5,10.4 L12,13.9" fill="none" stroke="#505050" stroke-width="1.6"/>
</svg>

<div class="a" id="tip"></div>
<div class="a" id="redbox"></div>

<div class="a" id="statusline"></div>
<div class="ssep" style="left:743px"></div>
<div class="ssep" style="left:914px"></div>
</body></html>
